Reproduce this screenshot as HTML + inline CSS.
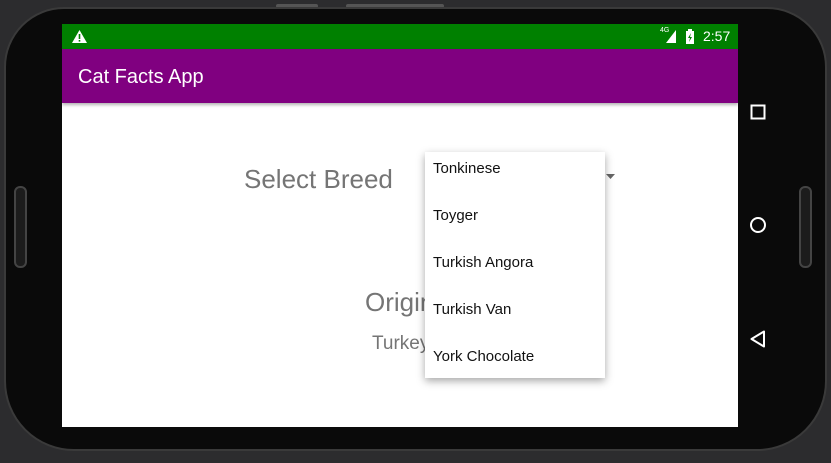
<!DOCTYPE html><html><head><style>
body{margin:0;width:831px;height:463px;background:#2c2c2e;position:relative;overflow:hidden;font-family:"Liberation Sans",sans-serif}
.ph{position:absolute;left:4px;top:7px;width:823px;height:444px;background:#0a0a0a;border-radius:60px 60px 70px 70px;border:2px solid #3a3a3a;box-sizing:border-box}
.btn{position:absolute;background:#555;border-radius:3px}
.scr{position:absolute;left:62px;top:24px;width:676px;height:403px;background:#fff;overflow:hidden}
.sb{position:absolute;left:0;top:0;width:676px;height:25px;background:#008000;color:#fff}
.ab{position:absolute;left:0;top:25px;width:676px;height:54px;background:#800080;color:#fff;font-size:19px;box-shadow:0 2px 3px rgba(0,0,0,.3)}
.t{position:absolute;white-space:nowrap;color:#757575}
.dd{position:absolute;left:363px;top:128px;width:180px;height:226px;background:#fff;box-shadow:0 3px 8px rgba(0,0,0,.35)}
.dd div{position:absolute;left:8px;font-size:15px;color:#111}
.side{position:absolute;border:2px solid #444;border-radius:6px;background:#1c1c1c;width:9px;height:78px}
</style></head><body>
<div class="btn" style="left:276px;top:4px;width:42px;height:4px"></div>
<div class="btn" style="left:346px;top:4px;width:98px;height:4px"></div>
<div class="ph"></div>
<div class="side" style="left:14px;top:186px"></div>
<div class="side" style="left:799px;top:186px"></div>
<div class="scr">
<div class="sb"><svg style="position:absolute;left:10px;top:6px" width="15" height="13"><path d="M7.5 0L15 13H0Z" fill="#fff"/><rect x="6.7" y="4" width="1.6" height="5" fill="#008000"/><rect x="6.7" y="10" width="1.6" height="1.6" fill="#008000"/></svg>
<span style="position:absolute;left:598px;top:3px;font-size:7px">4G</span>
<svg style="position:absolute;left:604px;top:6px" width="10" height="13"><path d="M10 0V13H0Z" fill="#fff"/></svg>
<svg style="position:absolute;left:624px;top:5px" width="8" height="15"><rect x="0" y="2" width="8" height="13" fill="#fff"/><rect x="2" y="0" width="4" height="2" fill="#fff"/><path d="M5 4L2 9H4L3 13L6 8H4Z" fill="#008000"/></svg>
<span style="position:absolute;left:641px;top:4px;font-size:14px">2:57</span></div>
<div class="ab"><span style="position:absolute;left:16px;top:17px;font-size:20px">Cat Facts App</span></div>
<div class="t" style="left:182px;top:140px;font-size:26px">Select Breed</div>
<svg style="position:absolute;left:544px;top:150px" width="9" height="6"><path d="M0 0H9L4.5 5Z" fill="#666"/></svg>
<div class="t" style="left:303px;top:263px;font-size:26px">Origin</div>
<div class="t" style="left:310px;top:309px;font-size:19px">Turkey</div>
<div class="dd">
<div style="top:8px">Tonkinese</div>
<div style="top:55px">Toyger</div>
<div style="top:102px">Turkish Angora</div>
<div style="top:149px">Turkish Van</div>
<div style="top:196px">York Chocolate</div>
</div>
</div>
<svg style="position:absolute;left:750px;top:104px" width="16" height="16"><rect x="1.5" y="1.5" width="13" height="13" fill="none" stroke="#fff" stroke-width="2"/></svg>
<svg style="position:absolute;left:749px;top:216px" width="18" height="18"><circle cx="9" cy="9" r="7" fill="none" stroke="#fff" stroke-width="2"/></svg>
<svg style="position:absolute;left:750px;top:330px" width="16" height="18"><path d="M14 1.5V16.5L1.5 9Z" fill="none" stroke="#fff" stroke-width="2" stroke-linejoin="round"/></svg>
</body></html>
